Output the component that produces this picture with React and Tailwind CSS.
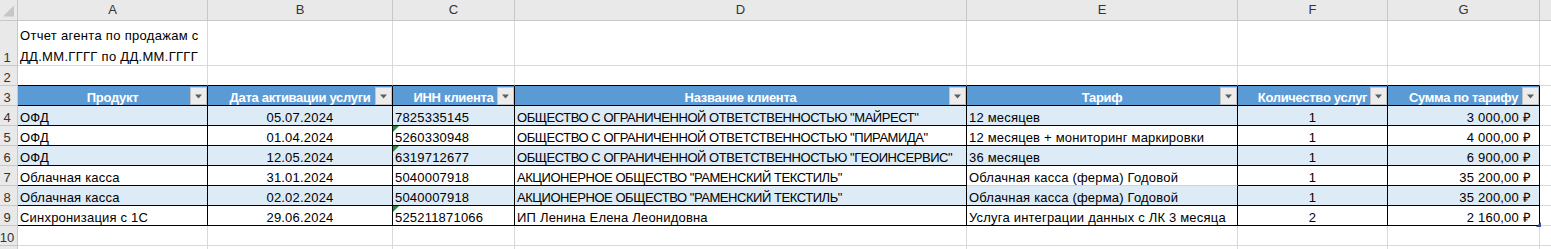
import React from 'react';

const GRID = 'grid grid-cols-[18px_190px_185px_122px_452px_271px_150px_152px_11px]';

const letters = ['A', 'B', 'C', 'D', 'E', 'F', 'G'];

const headers = [
  'Продукт',
  'Дата активации услуги',
  'ИНН клиента',
  'Название клиента',
  'Тариф',
  'Количество услуг',
  'Сумма по тарифу',
];

const rows = [
  ['ОФД', '05.07.2024', '7825335145', 'ОБЩЕСТВО С ОГРАНИЧЕННОЙ ОТВЕТСТВЕННОСТЬЮ "МАЙРЕСТ"', '12 месяцев', '1', '3 000,00 ₽'],
  ['ОФД', '01.04.2024', '5260330948', 'ОБЩЕСТВО С ОГРАНИЧЕННОЙ ОТВЕТСТВЕННОСТЬЮ "ПИРАМИДА"', '12 месяцев + мониторинг маркировки', '1', '4 000,00 ₽'],
  ['ОФД', '12.05.2024', '6319712677', 'ОБЩЕСТВО С ОГРАНИЧЕННОЙ ОТВЕТСТВЕННОСТЬЮ "ГЕОИНСЕРВИС"', '36 месяцев', '1', '6 900,00 ₽'],
  ['Облачная касса', '31.01.2024', '5040007918', 'АКЦИОНЕРНОЕ ОБЩЕСТВО "РАМЕНСКИЙ ТЕКСТИЛЬ"', 'Облачная касса (ферма) Годовой', '1', '35 200,00 ₽'],
  ['Облачная касса', '02.02.2024', '5040007918', 'АКЦИОНЕРНОЕ ОБЩЕСТВО "РАМЕНСКИЙ ТЕКСТИЛЬ"', 'Облачная касса (ферма) Годовой', '1', '35 200,00 ₽'],
  ['Синхронизация с 1С', '29.06.2024', '525211871066', 'ИП Ленина Елена Леонидовна', 'Услуга интеграции данных с ЛК 3 месяца', '2', '2 160,00 ₽'],
];

const align = ['justify-start pl-[2px]', 'justify-center', 'justify-start pl-[2px]', 'justify-start pl-[2px]', 'justify-start pl-[2px]', 'justify-center', 'justify-end pr-[8px]'];

// cells in column C with the green "number stored as text" marker
const greenMarks = [1, 2, 5];

const RowNum = ({ n }) => (
  <div className="bg-[#e9e9e9] border-r border-b border-[#c8c8c8] flex items-end justify-center pr-[3px] text-[13px] leading-[15px] text-[#333]">
    {n}
  </div>
);

const FilterButton = () => (
  <div className="absolute right-0 bottom-0 w-[17px] h-[18px] bg-[#ececec] border border-[#c4c4c4] flex items-center justify-center">
    <svg width="9" height="5" viewBox="0 0 9 5">
      <path d="M1 0.5h7L4.5 4.5z" fill="#5f5f5f" />
    </svg>
  </div>
);

export default function App() {
  return (
    <div className="w-[1551px] h-[249px] overflow-hidden bg-white font-['Liberation_Sans',Arial,sans-serif] text-black">
      {/* column letters */}
      <div className={`${GRID} h-[21px]`}>
        <div className="bg-[#e9e9e9] border-r border-b border-[#c8c8c8] flex items-end justify-end p-[3px]">
          <svg width="12" height="12" viewBox="0 0 12 12">
            <path d="M12 0V12H0z" fill="#c6c6c6" />
          </svg>
        </div>
        {letters.map(l => (
          <div key={l} className="bg-[#e9e9e9] border-r border-b border-[#c8c8c8] flex items-center justify-center text-[13px] text-[#333]">
            {l}
          </div>
        ))}
        <div className="bg-[#e9e9e9] border-b border-[#c8c8c8]" />
      </div>

      {/* row 1 */}
      <div className={`${GRID} h-[45px]`}>
        <RowNum n={1} />
        <div className="border-r border-b border-[#d9d9d9] flex items-end pl-[2px] text-[13px] leading-[21px] tracking-[0.3px]">
          <div className="relative top-[2px]">
            Отчет агента по продажам с<br />ДД.ММ.ГГГГ по ДД.ММ.ГГГГ
          </div>
        </div>
        {letters.slice(1).map(l => (
          <div key={l} className="border-r border-b border-[#d9d9d9]" />
        ))}
        <div className="border-b border-[#d9d9d9]" />
      </div>

      {/* row 2 */}
      <div className={`${GRID} h-[20px]`}>
        <RowNum n={2} />
        {letters.map(l => (
          <div key={l} className="border-r border-b border-r-[#d9d9d9] border-b-black" />
        ))}
        <div className="border-b border-[#d9d9d9]" />
      </div>

      {/* row 3: table header */}
      <div className={`${GRID} h-[20px]`}>
        <RowNum n={3} />
        {headers.map(h => (
          <div key={h} className="relative bg-[#5b9bd5] border-r border-b border-black flex items-end justify-center text-white font-bold text-[13px] leading-[15px] tracking-[-0.3px] whitespace-nowrap">
            {h}
            <FilterButton />
          </div>
        ))}
        <div className="border-b border-[#d9d9d9]" />
      </div>

      {/* data rows */}
      {rows.map((row, i) => (
        <div key={i} className={`${GRID} h-[20px]`}>
          <RowNum n={i + 4} />
          {row.map((v, j) => (
            <div
              key={j}
              className={`relative border-r border-b border-black flex items-end whitespace-nowrap text-[13px] leading-[15px] ${align[j]} ${i % 2 === 0 ? 'bg-[#ddebf7]' : 'bg-white'} ${i === 3 && j === 4 ? 'border-b-[#bdd7ee]' : ''} ${j === 3 && i < 5 ? 'tracking-[-0.45px]' : 'tracking-[0.2px]'}`}
            >
              {v}
              {j === 2 && greenMarks.includes(i) && (
                <div className="absolute left-0 top-0 w-0 h-0 border-t-[6px] border-r-[6px] border-t-[#1f8f3a] border-r-transparent" />
              )}
              {i === 5 && j === 6 && (
                <svg className="absolute right-[-2px] bottom-[-2px]" width="5" height="5" viewBox="0 0 5 5">
                  <path d="M5 0V5H0z" fill="#3b4a93" />
                </svg>
              )}
            </div>
          ))}
          <div className="border-b border-[#d9d9d9]" />
        </div>
      ))}

      {/* rows 10, 11 */}
      {[10, 11].map(n => (
        <div key={n} className={`${GRID} h-[20px]`}>
          <RowNum n={n === 10 ? n : ''} />
          {letters.map(l => (
            <div key={l} className="border-r border-b border-[#d9d9d9]" />
          ))}
          <div className="border-b border-[#d9d9d9]" />
        </div>
      ))}
    </div>
  );
}
